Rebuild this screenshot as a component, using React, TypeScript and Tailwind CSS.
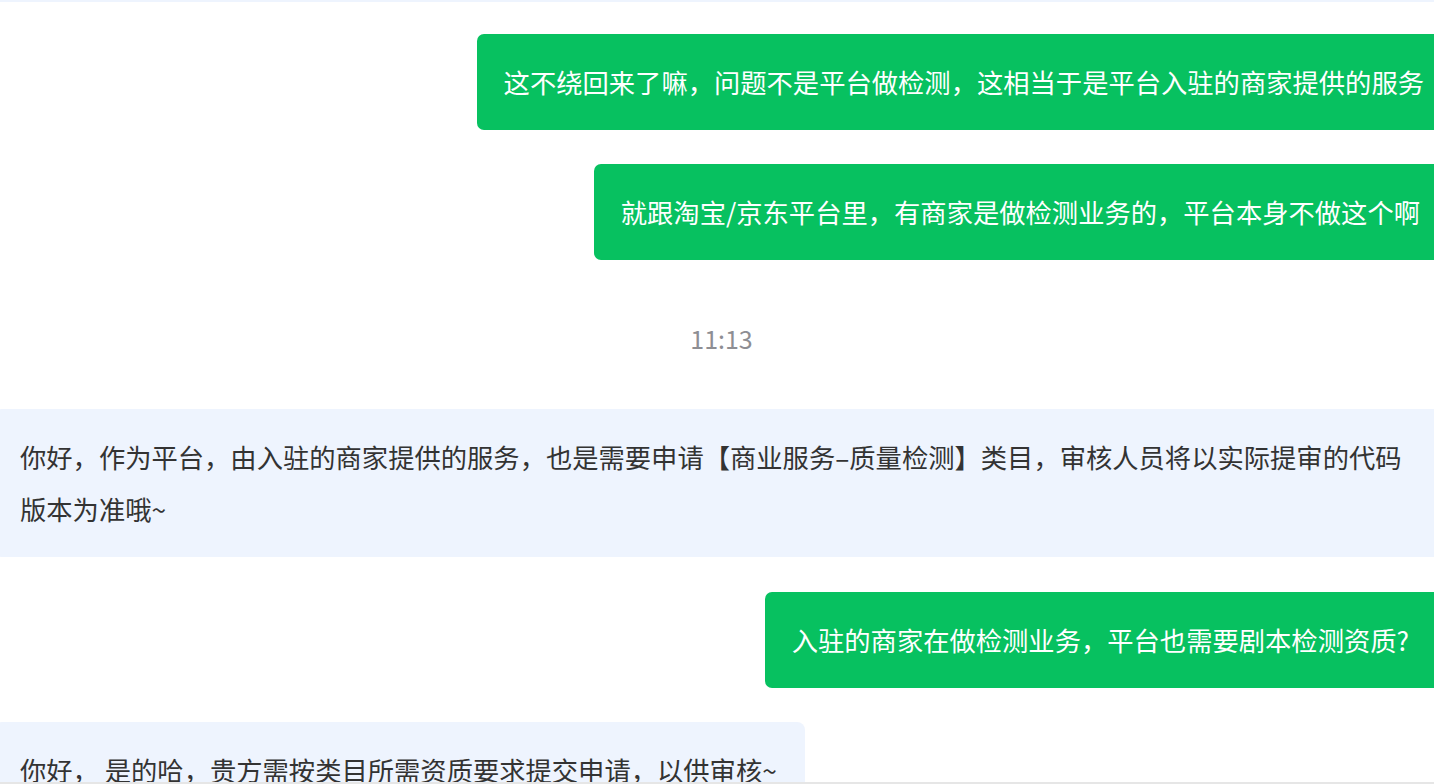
import React from "react";

const font = { fontFamily: '"Noto Sans CJK SC", "Noto Sans", sans-serif' };

function Green({ children, pr = "pr-[26px]" }: { children: React.ReactNode; pr?: string }) {
  return (
    <div className="flex justify-end">
      <div className={`rounded-[7px] bg-[#07c160] pl-[27px] ${pr} py-[22px] text-[26.3px] leading-[52px] text-white whitespace-nowrap`}>
        {children}
      </div>
    </div>
  );
}

export default function App() {
  return (
    <div className="relative h-[784px] w-[1434px] overflow-hidden bg-white" style={font}>
      <div className="ml-[-6px] flex w-[1455px] flex-col">
        <div className="h-[2px] bg-[#eef4fe]" />
        <div className="mt-[32px]">
          <Green pr="pr-[25px]">这不绕回来了嘛，问题不是平台做检测，这相当于是平台入驻的商家提供的服务</Green>
        </div>
        <div className="mt-[34px]">
          <Green pr="pr-[29px]">就跟淘宝/京东平台里，有商家是做检测业务的，平台本身不做这个啊</Green>
        </div>
        <div className="mt-[52px] text-center text-[25px] leading-[52px] text-[#8e8e93]">11:13</div>
        <div className="mt-[45px] rounded-[8px] bg-[#eef4fe] px-[26px] py-[22px] text-[26.3px] leading-[52px] text-[#333333]">
          你好，作为平台，由入驻的商家提供的服务，也是需要申请【商业服务–质量检测】类目，审核人员将以实际提审的代码版本为准哦~
        </div>
        <div className="mt-[35px]">
          <Green pr="pr-[40px]">入驻的商家在做检测业务，平台也需要剧本检测资质?</Green>
        </div>
        <div className="mt-[34px] flex">
          <div className="rounded-[8px] bg-[#eef4fe] pl-[26px] pr-[28px] py-[22px] text-[26.3px] leading-[52px] text-[#333333] whitespace-nowrap">
            你好， 是的哈，贵方需按类目所需资质要求提交申请，以供审核~
          </div>
        </div>
      </div>
      <div className="absolute bottom-0 left-0 h-[2px] w-full bg-[#e6e6e6]" />
    </div>
  );
}
